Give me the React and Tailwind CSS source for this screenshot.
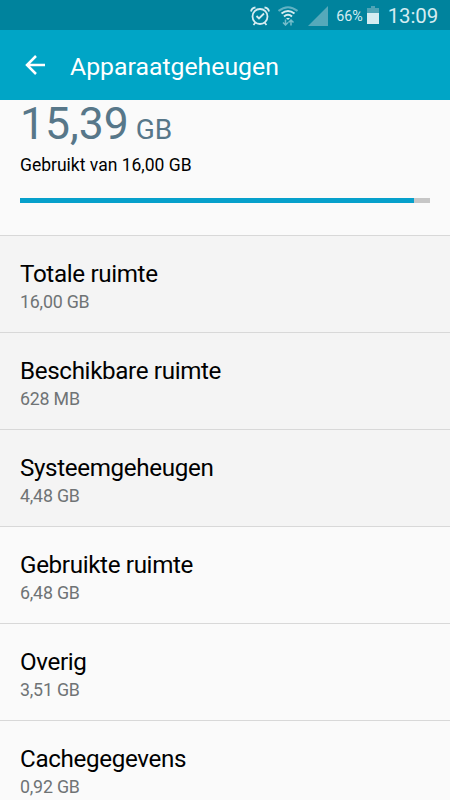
const rows = [
  { label: 'Totale ruimte', value: '16,00 GB', muted: true },
  { label: 'Beschikbare ruimte', value: '628 MB', muted: true },
  { label: 'Systeemgeheugen', value: '4,48 GB', muted: true },
  { label: 'Gebruikte ruimte', value: '6,48 GB' },
  { label: 'Overig', value: '3,51 GB' },
  { label: 'Cachegegevens', value: '0,92 GB' },
]

const StatusBar = () => (
  <div className="h-[30px] bg-[#00839d] flex items-center justify-end pr-3 text-[#d5ecf1]">
    <svg className="w-5 h-5 mr-2 mt-px" viewBox="0 0 20 20" fill="none" stroke="currentColor" strokeWidth="1.800">
      <circle cx="10" cy="10.500" r="7.500" />
      <path d="M1 5.500Q1.500 2 5.500 1.500M19 5.500Q18.500 2 14.500 1.500M3.500 19l2-2.500M16.500 19l-2-2.500" />
      <path d="M6.500 10 9 12.500l5-5" />
    </svg>
    <svg className="w-5 h-5 mr-2.5 mt-0.5" viewBox="0 0 20 20" fill="none" stroke="currentColor" strokeWidth="2">
      <path d="M.5 5Q10-2.500 19.500 5" opacity=".45" />
      <path d="M3.500 7.500Q10 2.500 16.500 7.500M6 10.500Q10 7 14 10.500" />
      <path d="M8 12h4l-2 2z" fill="currentColor" stroke="none" />
      <path d="M7.500 13.500v5M5 16.500l2.500 2.500 2.500-2.500M13 19.500v-5.500M10.500 16.500l2.500-2.500 2.500 2.500" strokeWidth="1.500" opacity=".55" />
    </svg>
    <svg className="w-5 h-5 mr-2 mt-0.5" viewBox="0 0 20 20">
      <path d="M20 0v20H0z" fill="#55a9ba" />
    </svg>
    <span className="text-[14.3px] mr-1 mt-[3px]">66%</span>
    <svg className="w-3 h-[18px] mr-[9px]" viewBox="0 0 12 18">
      <path d="M4 0h4v2h4v16H0V2h4z" fill="#4fa4b6" />
      <path d="M0 7h12v11H0z" fill="currentColor" />
    </svg>
    <span className="text-[20.4px] mt-0.5 tracking-[-0.1px]">13:09</span>
  </div>
)

const App = () => (
  <div className="h-[800px] w-[450px] overflow-hidden bg-[#fafafa] font-['Roboto',sans-serif]">
    <StatusBar />
    <header className="h-[70px] bg-[#00a5c6] flex items-center text-white">
      <svg className="w-5 h-5 ml-[25px] mr-[25px]" viewBox="0 0 20 20" fill="none" stroke="currentColor" strokeWidth="2.500">
        <path d="M20 10H2M11 1l-9 9 9 9" />
      </svg>
      <h1 className="text-[24.8px] mt-1">Apparaatgeheugen</h1>
    </header>
    <section className="h-[135px] px-5">
      <div className="h-[53px] flex items-baseline gap-2 text-[#577789]">
        <span className="text-[44.5px] leading-[49px]">15,39</span>
        <span className="text-[28px] leading-7 -ml-px">GB</span>
      </div>
      <p className="text-[17.5px] leading-6 text-black">Gebruikt van 16,00 GB</p>
      <div className="mt-[21px] h-[5px] bg-[#c6c6c6]">
        <div className="h-full w-[394px] bg-[#06a0cb]" />
      </div>
    </section>
    <ul>
      {rows.map((row) => (
        <li
          key={row.label}
          className={`h-[97px] px-5 pt-[22px] border-t border-[#d8d8d8] ${row.muted ? 'bg-[#f4f4f4]' : ''}`}
        >
          <div className="text-[24.2px] tracking-[-0.35px] leading-8 text-black">{row.label}</div>
          <div className="text-[17.8px] tracking-[-0.2px] leading-6 text-[#6f7375]">{row.value}</div>
        </li>
      ))}
    </ul>
  </div>
)

export default App
